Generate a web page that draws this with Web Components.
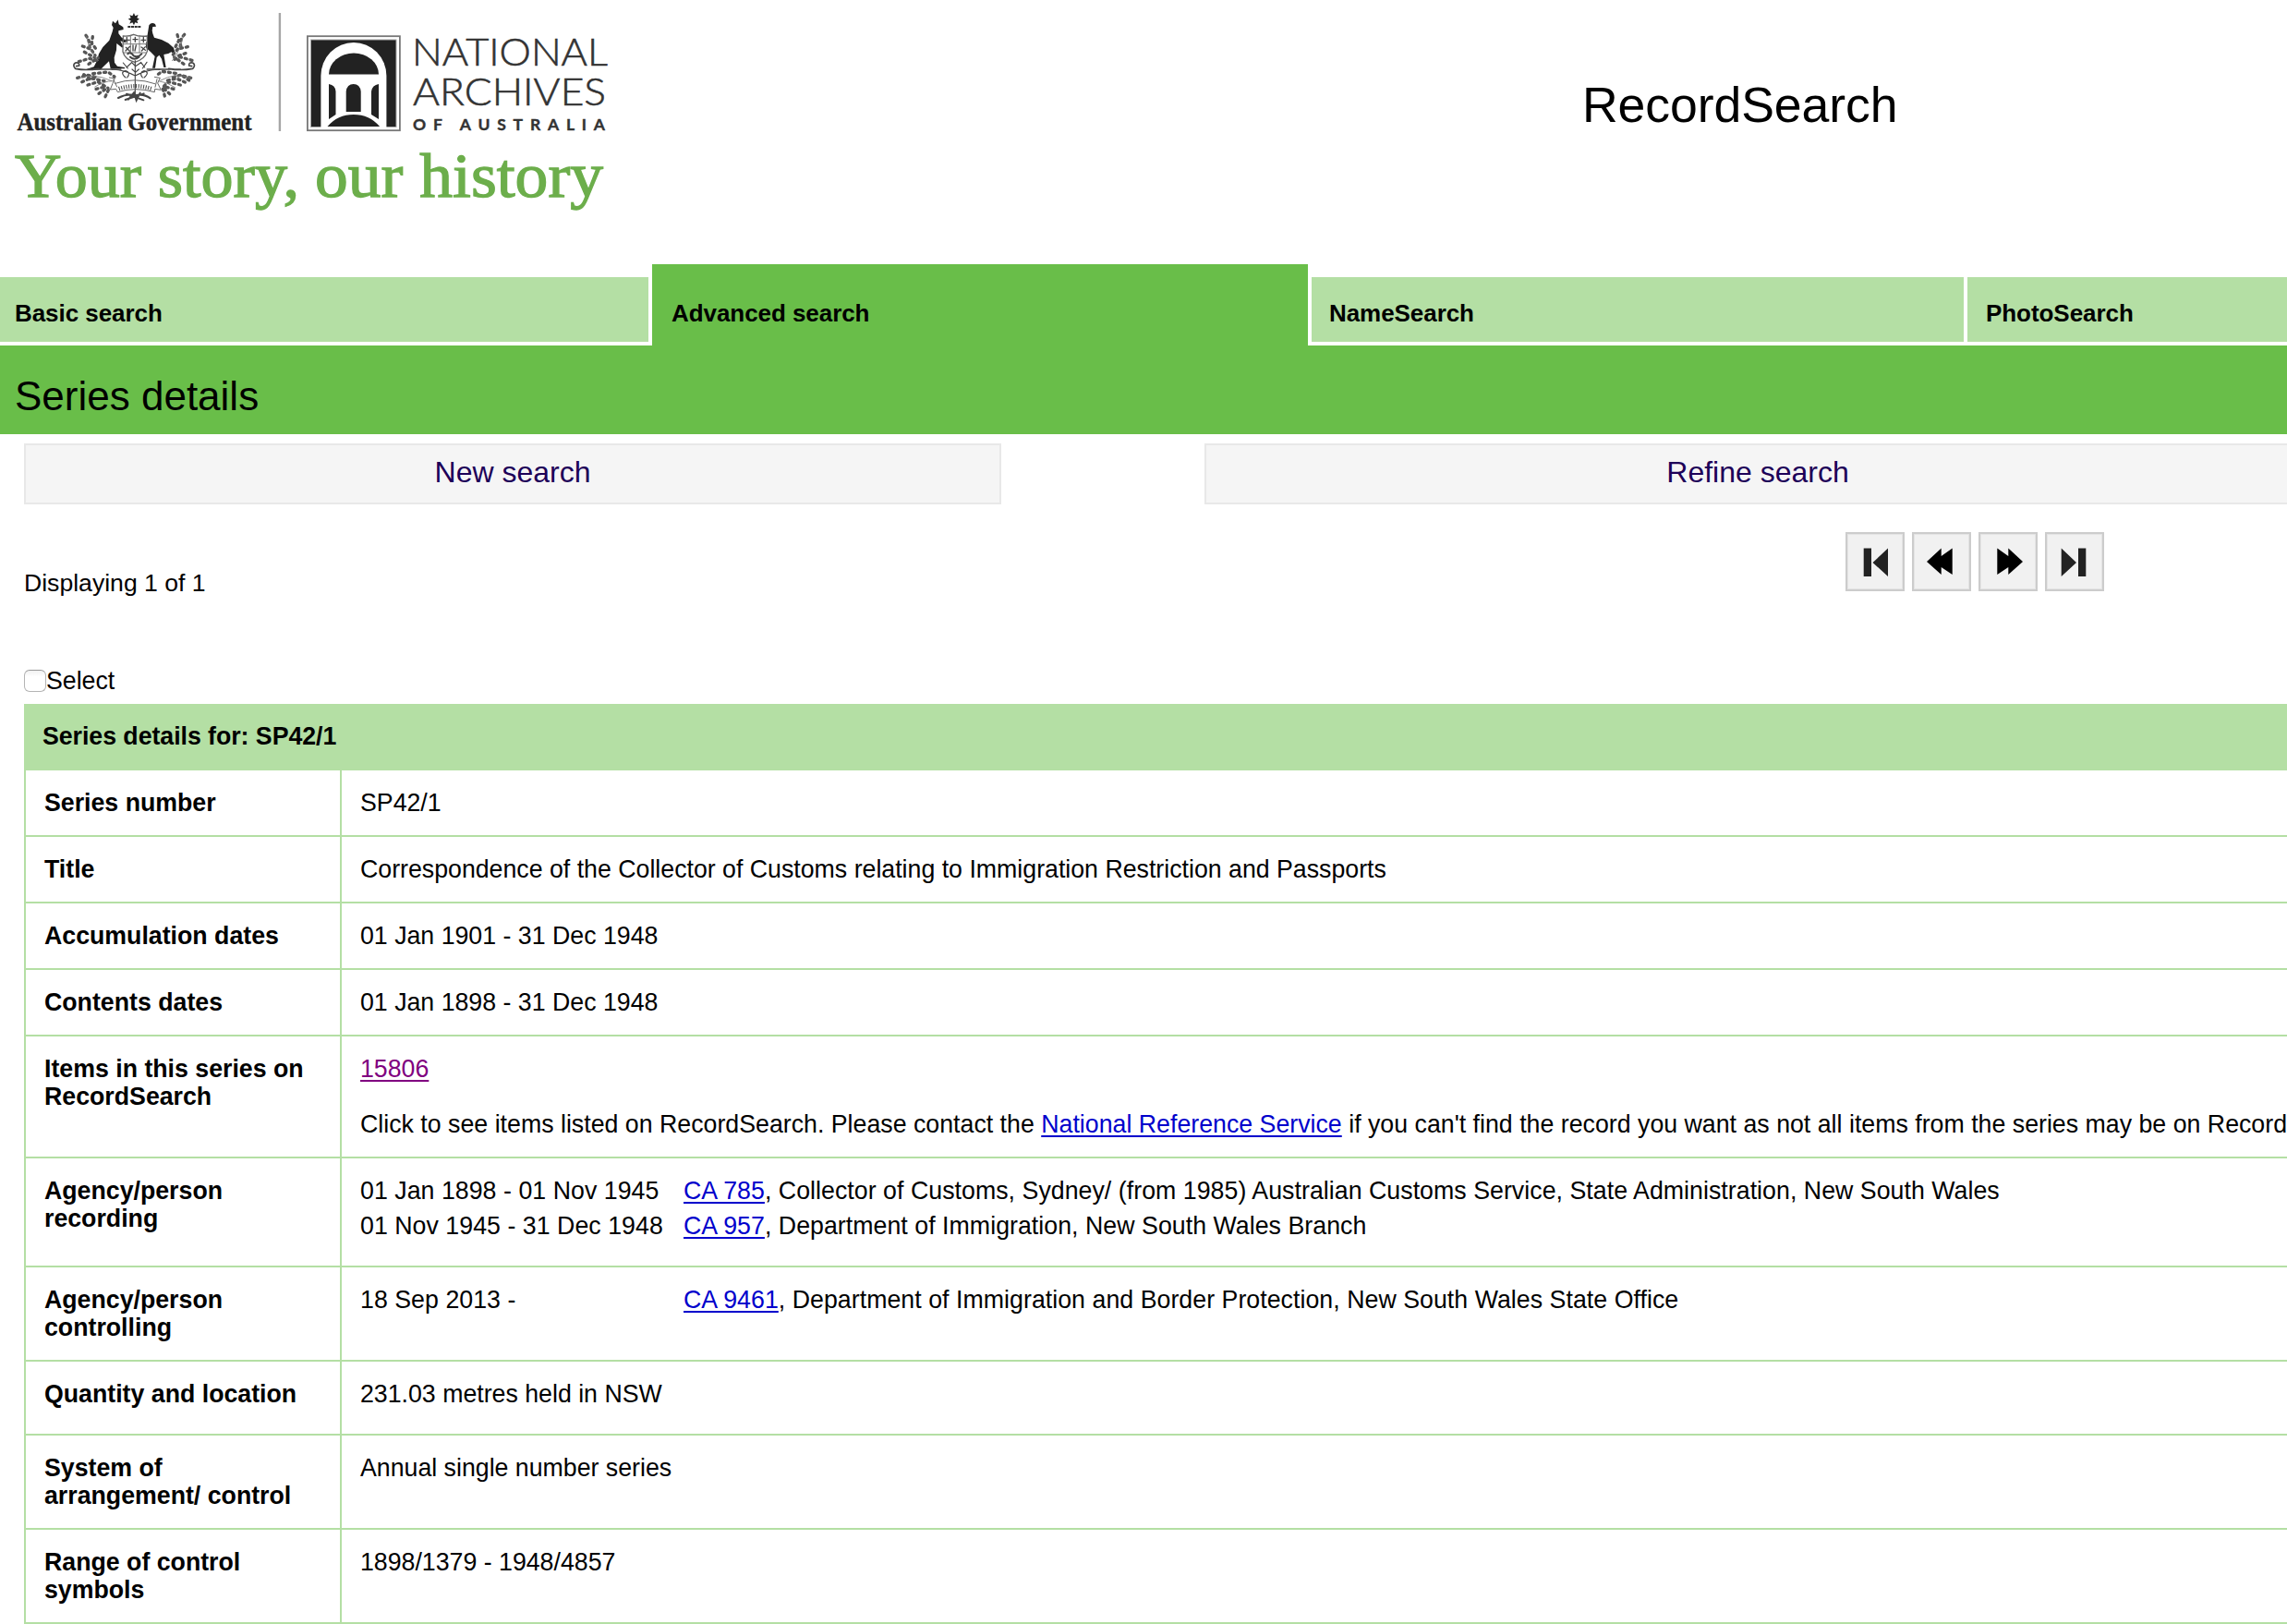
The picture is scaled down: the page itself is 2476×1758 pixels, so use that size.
<!DOCTYPE html>
<html lang="en">
<head>
<meta charset="utf-8">
<title>RecordSearch - Series details</title>
<style>
  html, body { margin: 0; padding: 0; background: #fff; }
  body {
    width: 2476px; height: 1758px; overflow: hidden;
    font: 26px/30px "Liberation Sans", Arial, Helvetica, sans-serif; color: #000;
    --green: #69be49; --pale: #b4dfa4;
  }
</style>
</head>
<body>
<record-page></record-page>
<script>
const define = (name, html) => {
  const t = document.createElement('template');
  t.innerHTML = html;
  customElements.define(name, class extends HTMLElement {
    constructor() {
      super();
      this.attachShadow({ mode: 'open' }).appendChild(t.content.cloneNode(true));
    }
  });
};
const linkCss = `a{color:#0000cc;text-decoration:underline;text-decoration-thickness:2px;text-underline-offset:3px;text-decoration-skip-ink:none}a.visited{color:#800080}`;

define('coat-logo', `
<style>:host{display:block;width:680px;height:240px}svg{display:block}</style>
<svg width="680" height="240" viewBox="0 0 680 240">
  <g transform="translate(70 8) scale(.33333)" fill="#222" stroke="none">
    <!-- star and wreath -->
    <path d="M225 18l4 10 10-4-4 10 8 4-8 5 3 9-9-3-4 9-5-9-9 4 4-10-9-5 9-4-4-9 9 3z"/>
    <path d="M205 63h42" stroke="#333" stroke-width="6" stroke-dasharray="9 2"/>
    <!-- kangaroo -->
    <path d="M156 44l9 8 8-12 3 15 14 9 1 8-16 4v9l9 12 16 12-3 6-16-6 9 18-3 4-18-14-1 22-7 24 1 16 9 12 24 4v4h-46l-5-24-20 19-7 8-28 2-22-2 28-9 10-20 6-22 13-22 21-22 10-28 3-13-5-9z"/>
    <!-- emu -->
    <path d="M274 58q8-12 20-4l3 8-11 1q-4 14 0 22l5 13 24 7 22 11 17 15 6 23-14-9-9 5-15 3 3 18 4 24h-7l-7-28-8-12-8 8-5 34h-9l8-38-12-13-16-14-2-13q8-14 5-24z"/>
    <g fill="none" stroke="#444" stroke-width="4" stroke-linecap="round">
      <!-- shield -->
      <path d="M190 93q18 2 34-5 18 8 44 5v50q-8 26-40 35-32-8-39-34z" stroke="#666"/>
      <path d="M190 119h76M214 91v56M243 91v56M193 147h70" stroke="#777" stroke-width="3"/>
      <path d="M202 97v17M195 106h16M229 97v15M222 104h15M256 97v16M249 106h14M199 130l12 12M212 127l-14 14M222 123v18M232 123l-4 18M249 129l13 10M262 128l-12 13"/>
      <path d="M205 151q9-8 19 6 13 8 26-6M213 161q13 12 29 0" stroke-width="6"/>
      <!-- supporting scrolls -->
      <path d="M111 199q-42 7-76 0-11-12 0-19 14-2 12 9l-9 2M338 199q38 7 78 0 11-12 0-19-14-2-12 9l9 2M80 201h102M268 201h108" stroke-width="5"/>
      <!-- central branches -->
      <path d="M229 173v112M229 222q-42-22-76-20M229 222q42-22 80-20M198 228q-20-18 0-22 18 5 5 22M258 228q20-18 0-22-18 5-5 22M201 195l17-16 12 12 18-12 12 16M219 201l11 10 11-10M190 180l15 18M267 178l-14 20" stroke-width="3.500"/>
      <!-- motto ribbon -->
      <path d="M145 228l18 2-7 17-8 20 19-2 5 10q57-18 120 0l1-10 20 3-11-22 8-17-18-3M164 247q64-22 129 1M158 234l12 24M300 233l-6 26" stroke="#666" stroke-width="3"/>
      <path d="M176 264q54-17 106 0" stroke="#444" stroke-width="13" stroke-dasharray="3 5" stroke-linecap="butt"/>
      <!-- tied stems -->
      <path d="M174 294q30-16 56-8 26-7 48 9M201 281l55 20M257 280l-60 20M207 299l18-22 8 25 12-24" stroke-width="6"/>
    </g>
    <!-- wattle leaves -->
    <g fill="none" stroke="#555" stroke-width="10" stroke-linecap="round" stroke-dasharray="6 12">
      <path d="M69 91q13 16 12 38l18 27M91 95l-3 22 14 18M58 126l31 11M64 145l34 18M46 176l35-10 29 8M78 184l31-20"/>
      <path d="M389 88q-17 18-12 36l-25 29M366 89l5 18-11 21M400 128l-31 7M393 149l-28 10M414 172l-40-11-25 12M387 184l-31-22"/>
      <path d="M41 229l34-9 32 8M56 242l28-12 45 9M75 252l33-10 33 20M102 265l33-8M111 280l27-18M132 290l14-30M92 215l49-5 21 15M62 218l24 18"/>
      <path d="M410 229l-34-9-28 8M391 243l-28-12-40 9M376 252l-38-10-23 20M354 265l-33-8M341 281l-21-20M325 288l-7-28M361 214l-45-6-20 15M404 237l-26-18"/>
    </g>
    <g fill="none" stroke="#777" stroke-width="2.5">
      <path d="M70 92q10 50 40 82M386 90q-10 50-37 84M43 231q50-20 110 8M410 230q-50-20-100 8M97 259q30-20 60-20M360 261q-30-20-56-22"/>
    </g>
  </g>
  <rect x="301.7" y="14" width="2.4" height="128" fill="#a6a6a6"/>
  <text x="18.5" y="141" textLength="254" lengthAdjust="spacingAndGlyphs" font-family="Liberation Serif, serif" font-weight="700" font-size="27" fill="#222" stroke="#222" stroke-width=".4">Australian Government</text>
  <rect x="332.9" y="39.2" width="100" height="102" fill="#fff" stroke="#777" stroke-width="1.8"/>
  <rect x="336.5" y="43" width="92.5" height="94.5" fill="#222" stroke="#aaa" stroke-width="1"/>
  <path d="M347.4 138.500V82a35.500 36 0 0 1 71 0v56.500z" fill="#fff"/>
  <path d="M356 80.500a27 23 0 0 1 54 0z" fill="#222"/>
  <path d="M356 91q7 1 7.500 8v25l-7.500 5zM410 91q-7 1-8 8v25l8 5zM374.700 121V99q1-8 8-8t8 8v22zM354.500 137q11-13 28.300-13t28.300 13z" fill="#222"/>
  <g font-family="Lato, sans-serif" fill="#333" stroke="#333">
    <text x="446" y="70.700" textLength="212" lengthAdjust="spacingAndGlyphs" font-size="42" font-weight="300" stroke-width=".6">NATIONAL</text>
    <text x="447" y="114.300" textLength="209" lengthAdjust="spacingAndGlyphs" font-size="42" font-weight="300" stroke-width=".6">ARCHIVES</text>
    <text x="447" y="140.500" textLength="208" font-size="17.500" font-weight="700" stroke-width=".4">OF AUSTRALIA</text>
  </g>
  <g font-family="Liberation Serif, serif" font-size="68" fill="#6cae4b" stroke="#6cae4b" stroke-width="1.300">
    <text x="16" y="212.500" textLength="308" lengthAdjust="spacingAndGlyphs">Your story,</text>
    <text x="341" y="212.500" textLength="312" lengthAdjust="spacingAndGlyphs">our history</text>
  </g>
</svg>`);

define('page-header', `
<style>:host{display:flex;height:286px}h1{margin:83px 0 0 1033px;font:400 53.600px/60px "Liberation Sans",Arial,sans-serif;letter-spacing:-.1px}</style>
<coat-logo></coat-logo><h1><slot></slot></h1>`);

define('search-tab', `
<style>
:host{display:block;box-sizing:border-box;height:70px;width:706px;margin-top:14px;padding:24px 0 0 19px;background:var(--pale);font-weight:700}
:host([first]){width:702px;padding-left:16px;margin-right:4px}
:host([active]){height:88px;width:710px;margin:0 4px 0 0;padding:38px 0 0 21px;background:var(--green)}
:host([last]){width:346px;margin-left:4px;padding-left:20px}
</style><slot></slot>`);

define('search-tabs', `
<style>:host{display:flex;height:88px;overflow:hidden;letter-spacing:-.06px}</style>
<search-tab first>Basic search</search-tab><search-tab active>Advanced search</search-tab><search-tab>NameSearch</search-tab><search-tab last>PhotoSearch</search-tab>`);

define('title-band', `
<style>:host{display:block;box-sizing:border-box;height:96px;padding:30px 0 0 16px;background:var(--green);font-size:44px;line-height:50px}</style><slot></slot>`);

define('action-button', `
<style>:host{display:block;box-sizing:border-box;flex:none;width:1058px;height:66px;padding-top:11px;border:2px solid #e8e8e8;background:#f5f5f5;text-align:center;font-size:32px;line-height:36px;color:#1d0058}
:host([wide]){width:1198px}</style><slot></slot>`);

define('pager-button', `
<style>:host{display:block;box-sizing:border-box;width:64px;height:64px;border:2px solid #ccc;background:#f1f1f1;box-shadow:inset 0 0 0 1px #e4e4e4}
::slotted(svg){display:block;margin:-2px}</style><slot></slot>`);

define('record-pager', `
<style>:host{display:flex;gap:8px}</style>
<pager-button><svg width="64" height="64" fill="#222"><path d="M19.700 17.500H28V48h-8.300zM46 17.500V48L29.500 33z"/></svg></pager-button>
<pager-button><svg width="64" height="64"><path d="M16 32l15.700-14.500V26l12-8.500V46l-12-8v8z"/></svg></pager-button>
<pager-button><svg width="64" height="64"><path d="M48 32L32.300 17.500V26l-12-8.500V46l12-8v8z"/></svg></pager-button>
<pager-button><svg width="64" height="64" fill="#222"><path d="M36 17.500h8.300V48H36zM17.700 17.500V48L34 33z"/></svg></pager-button>`);

define('select-box', `
<style>:host{display:flex;height:30px}i{box-sizing:border-box;width:24px;height:24px;margin-top:3px;border:1.500px solid #b4b4b4;border-top-color:#999;border-radius:6px;background:linear-gradient(#f1f1f1,#fff 30%)}</style>
<i></i><slot></slot>`);

define('detail-row', `
<style>:host{display:grid;grid-template-columns:342px 1fr;border-bottom:2px solid var(--pale)}
.k{padding:20px 0 20px 20px;border-right:2px solid var(--pale);font-weight:700}
.v{padding:20px 0 20px 20px;white-space:nowrap}
:host([nested]) .v{padding-bottom:28px}</style>
<div class="k"><slot name="label"></slot></div><div class="v"><slot></slot></div>`);

define('agency-list', `
<style>:host{display:grid;grid-template-columns:350px 1fr;row-gap:8px;letter-spacing:.04px}</style><slot></slot>`);

define('series-table', `
<style>:host{display:block;border-left:2px solid var(--pale);width:2448px}
header{box-sizing:border-box;height:72px;padding:20px 0 0 18px;background:var(--pale);font-weight:700;letter-spacing:-.04px}
p{margin:30px 0 0;letter-spacing:.01px}${linkCss}</style>
<header>Series details for: SP42/1</header>
<detail-row><span slot="label">Series number</span>SP42/1</detail-row>
<detail-row><span slot="label">Title</span>Correspondence of the Collector of Customs relating to Immigration Restriction and Passports</detail-row>
<detail-row><span slot="label">Accumulation dates</span>01 Jan 1901 - 31 Dec 1948</detail-row>
<detail-row><span slot="label">Contents dates</span>01 Jan 1898 - 31 Dec 1948</detail-row>
<detail-row><span slot="label">Items in this series on<br>RecordSearch</span><a class="visited">15806</a><p>Click to see items listed on RecordSearch. Please contact the <a>National Reference Service</a> if you can't find the record you want as not all items from the series may be on Record</p></detail-row>
<detail-row nested><span slot="label">Agency/person<br>recording</span><agency-list><span>01 Jan 1898 - 01 Nov 1945</span><span><a>CA 785</a>, Collector of Customs, Sydney/ (from 1985) Australian Customs Service, State Administration, New South Wales</span><span>01 Nov 1945 - 31 Dec 1948</span><span><a>CA 957</a>, Department of Immigration, New South Wales Branch</span></agency-list></detail-row>
<detail-row><span slot="label">Agency/person<br>controlling</span><agency-list><span>18 Sep 2013 -</span><span><a>CA 9461</a>, Department of Immigration and Border Protection, New South Wales State Office</span></agency-list></detail-row>
<detail-row nested><span slot="label">Quantity and location</span>231.03 metres held in NSW</detail-row>
<detail-row><span slot="label">System of<br>arrangement/ control</span>Annual single number series</detail-row>
<detail-row><span slot="label">Range of control<br>symbols</span>1898/1379 - 1948/4857</detail-row>`);

define('record-page', `
<style>:host{display:block;overflow:hidden;width:2476px;height:1758px}
.actions{display:flex;gap:220px;padding:10px 0 0 26px}
.pos{display:flex;justify-content:space-between;align-items:flex-start;padding:30px 198px 0 26px;height:70px;font-size:26.600px}
.pos span{align-self:flex-end}
.body{display:flex;flex-direction:column;gap:10px;padding:76px 0 0 26px;font-size:26.720px}</style>
<page-header>RecordSearch</page-header>
<search-tabs></search-tabs>
<title-band>Series details</title-band>
<div class="actions"><action-button>New search</action-button><action-button wide>Refine search</action-button></div>
<div class="pos"><span>Displaying 1 of 1</span><record-pager></record-pager></div>
<div class="body"><select-box>Select</select-box><series-table></series-table></div>`);
</script>
</body>
</html>
